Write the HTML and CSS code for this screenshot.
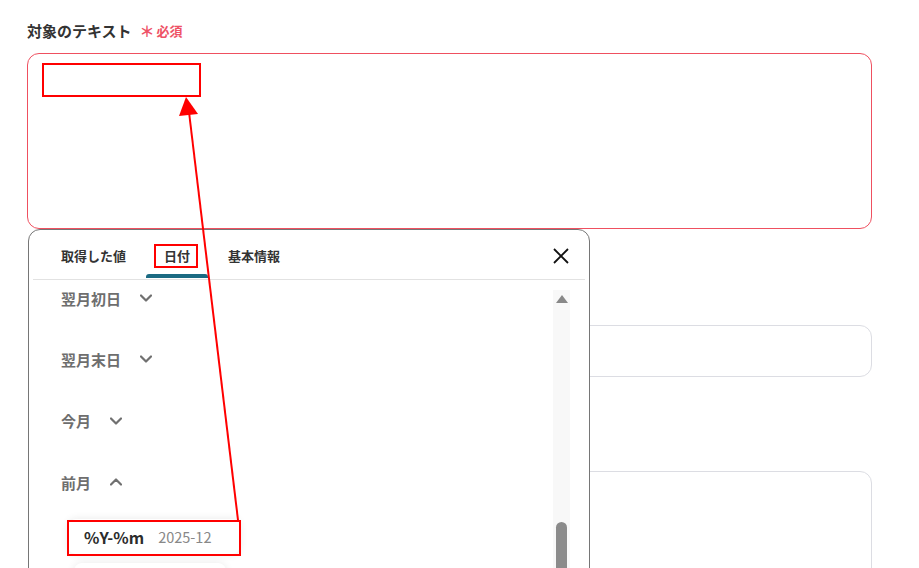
FILE: index.html
```html
<!DOCTYPE html>
<html lang="ja">
<head>
    <meta charset="UTF-8">
    <meta name="viewport" content="width=device-width, initial-scale=1.0">
    <title>対象のテキスト</title>
    <link rel="stylesheet" href="styles.css">
</head>
<body>
    <div class="form">
        <div class="field">
            <div class="label">対象のテキスト<span class="required"><span class="star">＊</span>必須</span></div>
            <div class="input-wrap">
                <div class="textarea is-error"></div>

                <div class="picker">
                    <div class="tabs">
                        <div class="tab">取得した値</div>
                        <div class="tab active">日付</div>
                        <div class="tab">基本情報</div>
                        <button class="close" type="button">
                            <svg width="16" height="16" viewBox="0 0 16 16">
                                <path d="M1 1 L15 15 M15 1 L1 15" stroke="#111" stroke-width="1.8" fill="none"/>
                            </svg>
                        </button>
                    </div>
                    <div class="picker-body">
                        <div class="groups">
                            <div class="group">翌月初日
                                <svg class="chev" width="12" height="8" viewBox="0 0 12 8"><path d="M1 1.5 L6 6.5 L11 1.5" /></svg>
                            </div>
                            <div class="group">翌月末日
                                <svg class="chev" width="12" height="8" viewBox="0 0 12 8"><path d="M1 1.5 L6 6.5 L11 1.5" /></svg>
                            </div>
                            <div class="group">今月
                                <svg class="chev" width="12" height="8" viewBox="0 0 12 8"><path d="M1 1.5 L6 6.5 L11 1.5" /></svg>
                            </div>
                            <div class="group">前月
                                <svg class="chev" width="12" height="8" viewBox="0 0 12 8"><path d="M1 6.5 L6 1.5 L11 6.5" /></svg>
                            </div>
                            <div class="options">
                                <div class="option"><span class="fmt">%Y-%m</span><span class="sample">2025-12</span></div>
                                <div class="option narrow"></div>
                            </div>
                        </div>
                        <div class="scrollbar">
                            <div class="scroll-up"></div>
                            <div class="scroll-thumb"></div>
                        </div>
                    </div>
                </div>
            </div>
        </div>

        <div class="field second">
            <div class="input"></div>
        </div>

        <div class="field third">
            <div class="textarea"></div>
        </div>
    </div>

    <!-- annotation overlay -->
    <svg class="annotations" width="919" height="568" viewBox="0 0 919 568">
        <rect x="43" y="64" width="157" height="32" fill="none" stroke="#f00" stroke-width="2"/>
        <rect x="155" y="245" width="42" height="22" fill="none" stroke="#f00" stroke-width="2"/>
        <rect x="68" y="521" width="172" height="34" fill="none" stroke="#f00" stroke-width="2"/>
        <line x1="238" y1="520" x2="189" y2="112" stroke="#f00" stroke-width="2"/>
        <polygon points="186,97 198,114 179,116" fill="#f00"/>
    </svg>
</body>
</html>
```

FILE: styles.css
```css
body {
    margin: 0;
    font-family: "Noto Sans CJK JP", "Noto Sans", sans-serif;
    color: #333;
    background-color: white;
    overflow: hidden;
    height: 568px;
}
.form {
    padding: 19px 47px 0 27px;
}
.label {
    display: flex;
    align-items: center;
    height: 22px;
    font-size: 15px;
    font-weight: 600;
    color: #333;
    margin-bottom: 12px;
}
.required {
    display: flex;
    align-items: center;
    color: #ee5266;
    font-size: 13px;
    font-weight: 700;
    margin-left: 8px;
}
.star {
    font-size: 15px;
    margin-right: 2px;
}
.input-wrap {
    position: relative;
}
.textarea {
    height: 174px;
    border: 1px solid #dcdde3;
    border-radius: 12px;
}
.textarea.is-error {
    border-color: #ef5060;
}
.input {
    height: 50px;
    border: 1px solid #dcdde3;
    border-radius: 12px;
}
.second,
.third {
    margin-left: 2px;
}
.second {
    margin-top: 96px;
}
.third {
    margin-top: 94px;
}

/* date picker popup */
.picker {
    position: absolute;
    top: 100%;
    left: 1px;
    width: 552px;
    height: 400px;
    padding: 0 4px;
    background-color: white;
    border: 1px solid #767676;
    border-radius: 12px;
    z-index: 2;
}
.tabs {
    display: flex;
    align-items: flex-start;
    gap: 2px;
    height: 49px;
    padding-left: 10px;
    border-bottom: 1px solid #e2e2e2;
}
.tab {
    position: relative;
    height: 49px;
    box-sizing: border-box;
    padding: 17px 18px 0;
    font-size: 13px;
    font-weight: 700;
    line-height: 18px;
    color: #333;
}
.tab.active::after {
    content: "";
    position: absolute;
    left: 0;
    right: 0;
    bottom: 1px;
    height: 4px;
    border-radius: 3px 3px 0 0;
    background-color: #1b6a82;
}
.close {
    margin: 18px 16px 0 auto;
    padding: 0;
    border: none;
    background: none;
    width: 16px;
    height: 16px;
    cursor: pointer;
}
.close svg {
    display: block;
}
.picker-body {
    display: flex;
    height: 350px;
}
.groups {
    flex: 1;
    display: flex;
    flex-direction: column;
    padding: 6px 0 0 28px;
}
.group {
    display: flex;
    align-items: center;
    gap: 19px;
    height: 24px;
    margin-bottom: 37.4px;
    font-size: 15px;
    font-weight: 700;
    color: #6e6e6e;
}
.group:nth-child(4) {
    margin-bottom: 25px;
}
.chev {
    fill: none;
    stroke: #707070;
    stroke-width: 2.2;
    stroke-linecap: round;
    stroke-linejoin: round;
}
.options {
    display: flex;
    flex-direction: column;
    gap: 9px;
    margin-left: 7px;
}
.option {
    display: flex;
    align-items: center;
    gap: 14px;
    width: 172px;
    height: 35px;
    box-sizing: border-box;
    padding: 0 16px;
    background-color: white;
    border-radius: 8px;
    box-shadow: 0 0 8px rgba(0,0,0,0.09);
}
.option.narrow {
    width: 152px;
    margin-left: 6px;
}
.fmt {
    font-size: 16px;
    font-weight: 700;
    color: #2c2c2c;
}
.sample {
    font-size: 14.5px;
    color: #888;
}
.scrollbar {
    position: relative;
    width: 17px;
    margin: 10px 15px 0 0;
    background-color: #f8f8f8;
}
.scroll-up {
    width: 0;
    height: 0;
    margin: 5px auto 0;
    border-left: 6px solid transparent;
    border-right: 6px solid transparent;
    border-bottom: 8px solid #888;
}
.scroll-thumb {
    width: 11px;
    height: 120px;
    margin: 219px auto 0;
    border-radius: 6px;
    background-color: #8b8b8b;
}

.annotations {
    position: absolute;
    top: 0;
    left: 0;
    z-index: 5;
    pointer-events: none;
}
```
